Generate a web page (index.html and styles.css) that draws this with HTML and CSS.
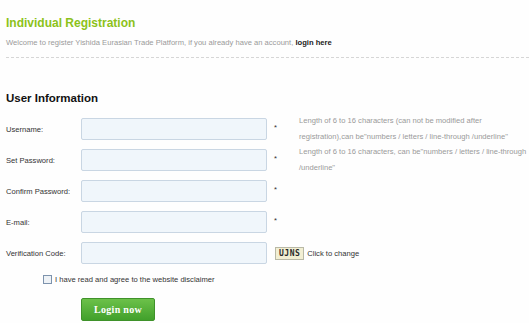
FILE: index.html
```html
<!DOCTYPE html>
<html lang="en">
<head>
<meta charset="utf-8">
<title>Individual Registration</title>
<link rel="stylesheet" href="styles.css">
</head>
<body>
<div class="page">
  <header class="intro">
    <h1 class="title">Individual Registration</h1>
    <p class="welcome">Welcome to register Yishida Eurasian Trade Platform, if you already have an account, <a class="login-link" href="#">login here</a></p>
  </header>
  <section class="form">
    <h2 class="section-title">User Information</h2>
    <div class="rows">
      <div class="row">
        <label class="label">Username:</label>
        <input class="field" type="text">
        <span class="star">*</span>
        <span class="hint">Length of 6 to 16 characters (can not be modified after registration),can be"numbers / letters / line-through /underline"</span>
      </div>
      <div class="row">
        <label class="label">Set Password:</label>
        <input class="field" type="password">
        <span class="star">*</span>
        <span class="hint">Length of 6 to 16 characters, can be"numbers / letters / line-through /underline"</span>
      </div>
      <div class="row">
        <label class="label">Confirm Password:</label>
        <input class="field" type="password">
        <span class="star">*</span>
      </div>
      <div class="row">
        <label class="label">E-mail:</label>
        <input class="field" type="text">
        <span class="star">*</span>
      </div>
      <div class="row">
        <label class="label">Verification Code:</label>
        <input class="field" type="text">
        <span class="captcha">UJNS</span>
        <span class="change">Click to change</span>
      </div>
    </div>
    <label class="agree"><input class="check" type="checkbox"><span>I have read and agree to the website disclaimer</span></label>
    <button class="submit" type="button">Login now</button>
  </section>
</div>
</body>
</html>
```
FILE: styles.css
```css
html, body {
  margin: 0;
  padding: 0;
  background: #fefefe;
}
.page {
  width: 529px;
  padding-left: 6px;
  box-sizing: border-box;
  font-family: "Liberation Sans", Arial, sans-serif;
  font-size: 7.6px;
  color: #333;
}
.intro {
  padding-top: 15px;
  padding-bottom: 7px;
  border-bottom: 1px dashed #d6d6d6;
}
.title {
  margin: 0;
  font-size: 12px;
  line-height: 16px;
  font-weight: bold;
  color: #8cc21a;
}
.welcome {
  margin: 5px 0 0;
  font-size: 7.6px;
  line-height: 14px;
  color: #9a9a9a;
}
.login-link {
  color: #222;
  font-weight: bold;
  text-decoration: none;
}
.section-title {
  margin: 32px 0 0;
  font-size: 11.5px;
  line-height: 16px;
  font-weight: bold;
  color: #111;
}
.rows {
  margin-top: 12px;
  display: flex;
  flex-direction: column;
  gap: 9px;
}
.row {
  display: flex;
  align-items: center;
  height: 22px;
}
.label {
  width: 75px;
  flex: none;
  color: #333;
}
.field {
  width: 186px;
  height: 22px;
  box-sizing: border-box;
  flex: none;
  margin: 0;
  border: 1px solid #c9d6e3;
  border-radius: 2px;
  background: #f0f6fb;
}
.star {
  width: 32px;
  flex: none;
  box-sizing: border-box;
  padding-left: 7px;
  margin-top: -4px;
  color: #333;
}
.hint {
  flex: 1;
  min-width: 0;
  line-height: 16px;
  color: #9a9a9a;
}
.captcha {
  margin-left: 8px;
  height: 11px;
  padding: 0 3px;
  display: flex;
  align-items: center;
  border: 1px solid #b9b9a6;
  background: #f2efd3;
  font-family: "DejaVu Sans Mono", monospace;
  font-weight: bold;
  font-size: 8px;
  letter-spacing: 0.5px;
  color: #2b2b2b;
}
.change {
  margin-left: 3px;
  color: #333;
}
.agree {
  margin: 8px 0 0 37px;
  height: 14px;
  display: flex;
  align-items: center;
  gap: 3px;
  color: #333;
}
.check {
  appearance: none;
  -webkit-appearance: none;
  margin: 0;
  width: 9px;
  height: 9px;
  border: 1px solid #7d93ad;
  background: #eef2f6;
  box-sizing: border-box;
}
.submit {
  display: block;
  margin: 12px 0 0 75px;
  width: 74px;
  height: 23px;
  border: 1px solid #3f922a;
  border-radius: 2px;
  background: linear-gradient(#6cc14a, #41a02b);
  color: #fff;
  font-family: "Liberation Serif", "Times New Roman", serif;
  font-weight: bold;
  font-size: 10px;
  letter-spacing: 0.3px;
  padding: 0;
}
```
